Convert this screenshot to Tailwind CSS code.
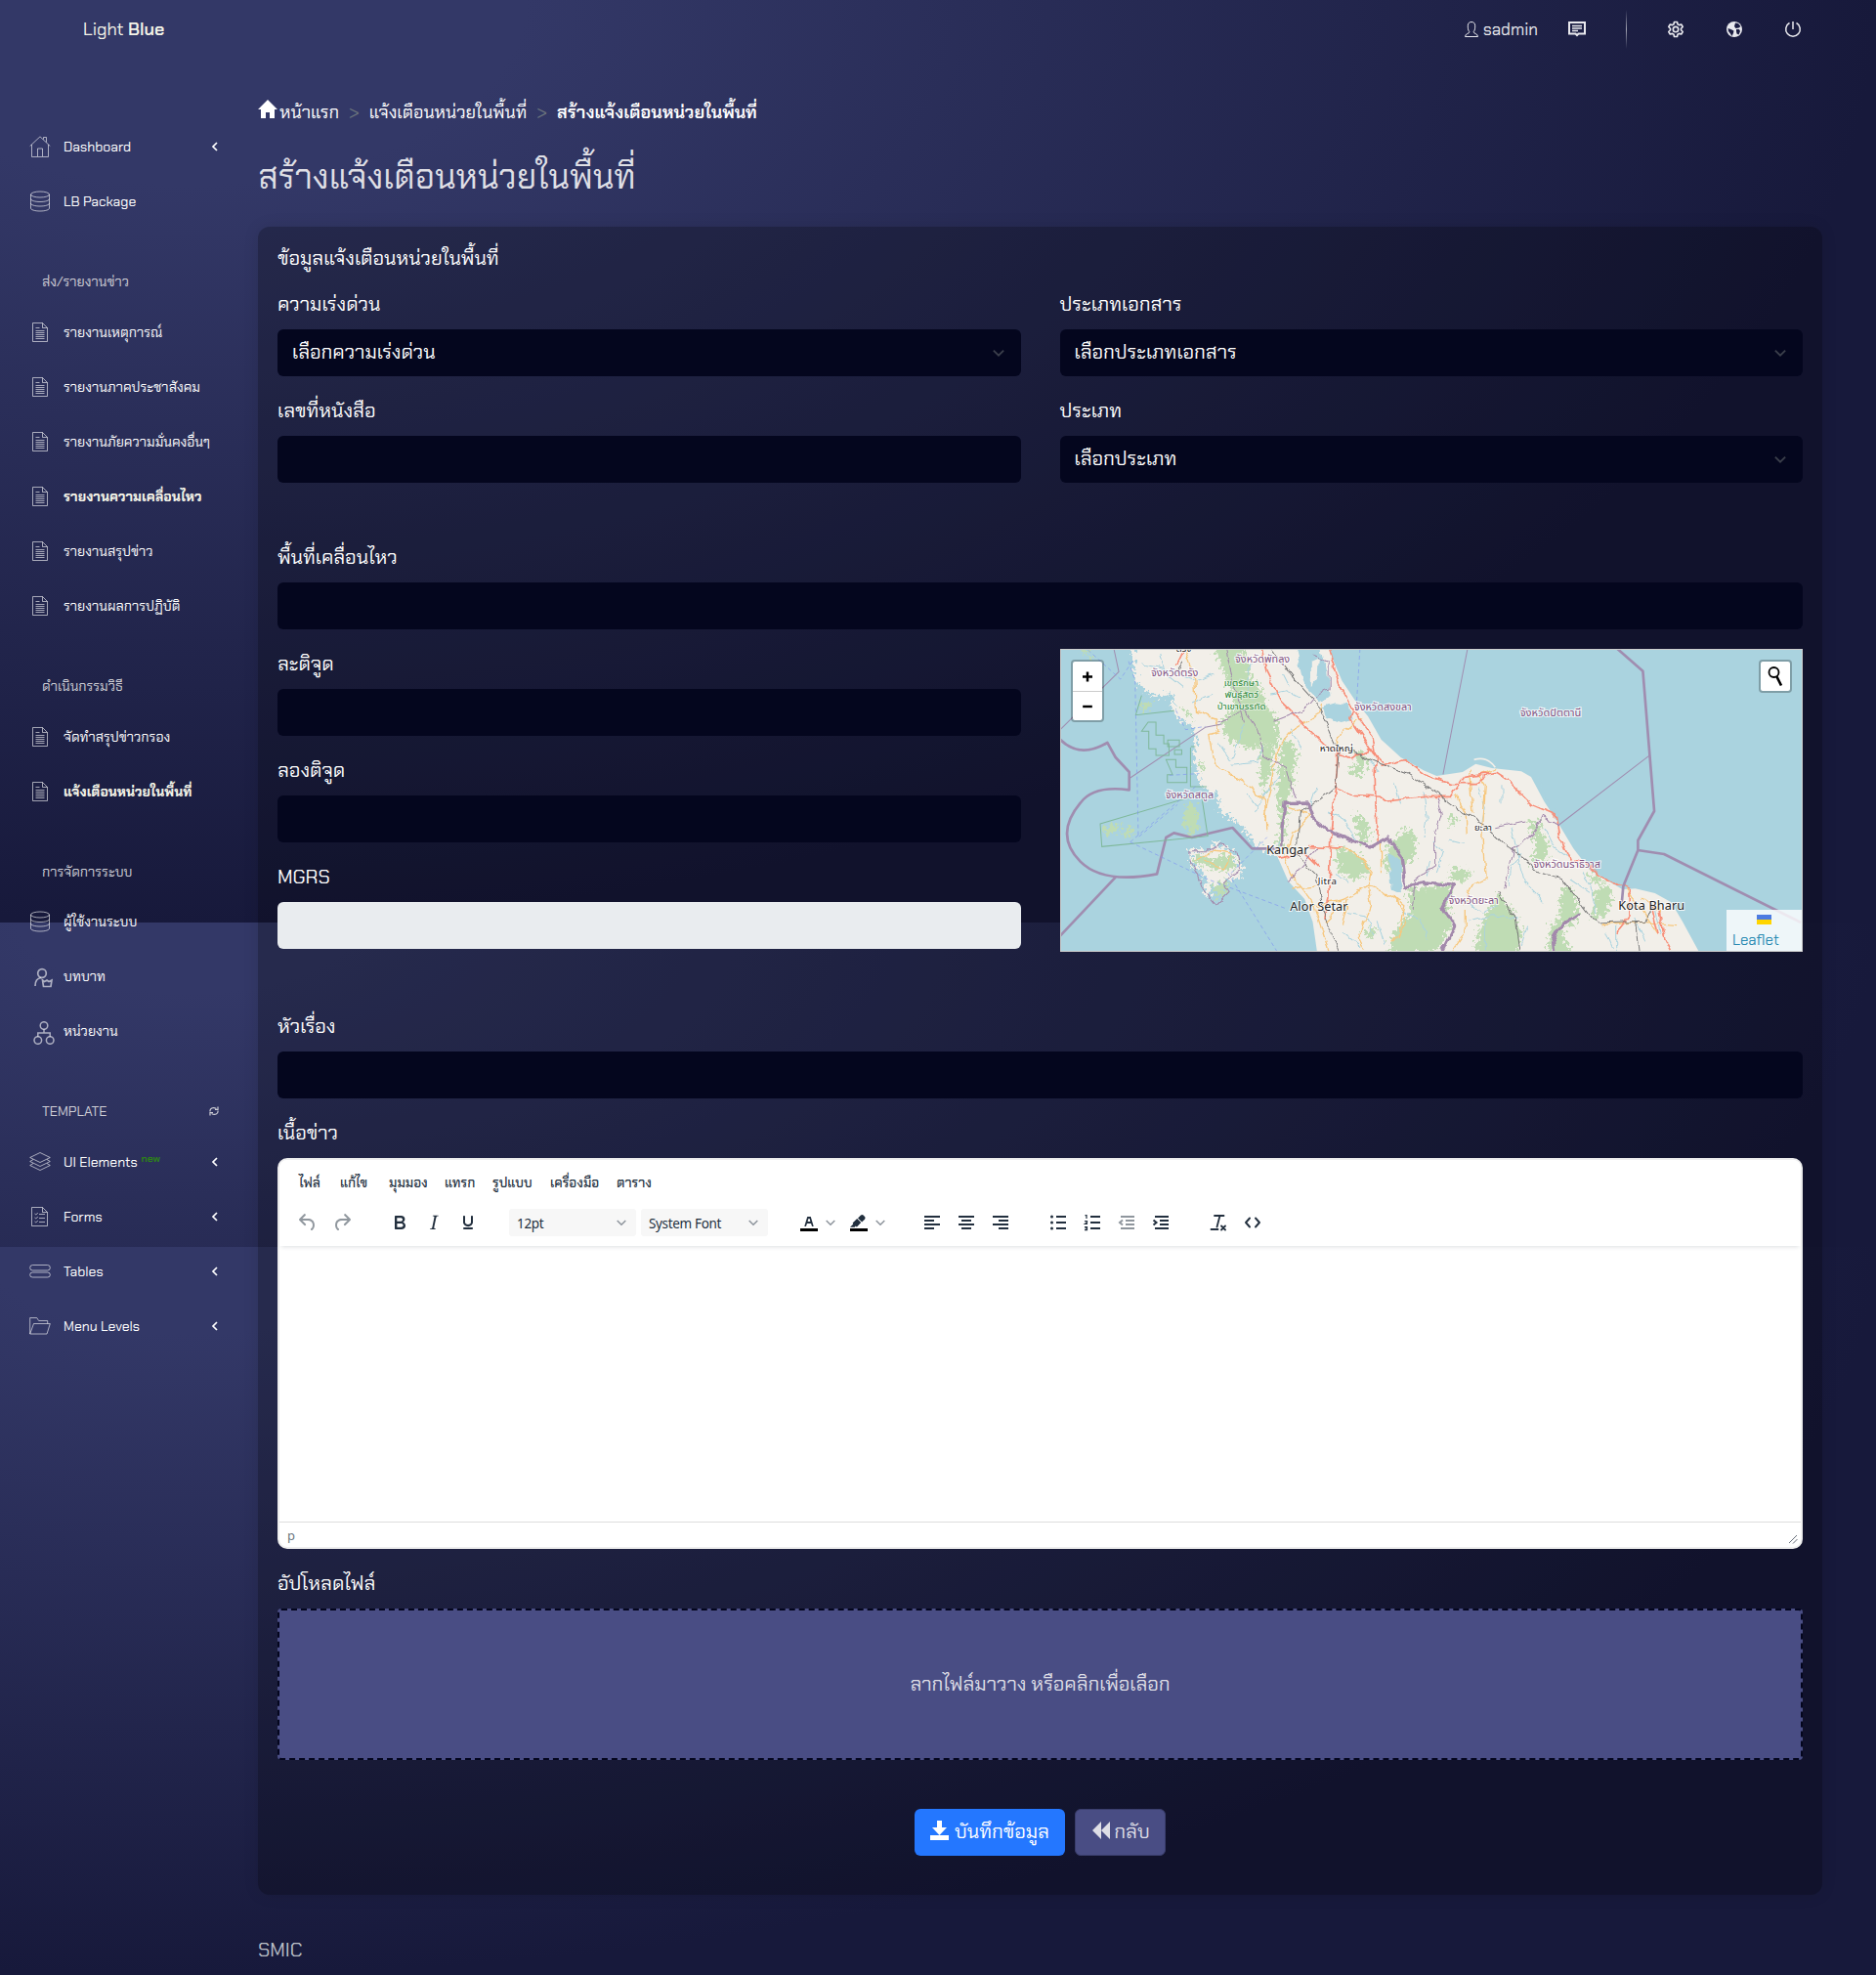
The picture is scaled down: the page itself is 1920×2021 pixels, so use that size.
<!DOCTYPE html>
<html lang="th">
<head>
<meta charset="utf-8">
<title>Light Blue</title>
<script src="https://cdn.jsdelivr.net/npm/@tailwindcss/browser@4"></script>
</head>
<body class="relative w-[1920px] h-[2021px] overflow-hidden bg-[#17193b] font-['Chakra_Petch','Inter',sans-serif] text-white">
<svg class="hidden">
  <symbol id="doc" viewBox="0 0 20 22"><path d="M2.5 1.5h10l5 5v14h-15zM12.500 1.500v5h5M5.500 6.500h4M5.500 9.500h9M5.500 11.500h9M5.500 13.500h9M5.500 15.500h9M5.500 17.500h9" fill="none" stroke="currentColor"/></symbol>
  <symbol id="db" viewBox="0 0 22 22"><g fill="none" stroke="currentColor"><ellipse cx="11" cy="4" rx="9.500" ry="3"/><path d="M1.500 4v14c0 1.700 4 3 9.500 3s9.500-1.300 9.500-3V4M1.500 8.500c0 1.700 4 3 9.500 3s9.500-1.300 9.500-3M1.500 13c0 1.700 4 3 9.500 3s9.500-1.300 9.500-3"/></g></symbol>
  <symbol id="left" viewBox="0 0 8 10"><path d="M6 1L2 5l4 4" fill="none" stroke="currentColor" stroke-width="1.700"/></symbol>
  <symbol id="down" viewBox="0 0 10 10"><path d="M.7 3L5 7.300 9.300 3" fill="none" stroke="currentColor" stroke-width="1.500"/></symbol>
</svg>

<!-- page backdrop: stacked gradient panels -->
<div class="absolute inset-0 -z-10 flex flex-col">
  <div class="h-[944px] bg-[radial-gradient(farthest-side_ellipse_at_10%_0,#333867_20%,#17193b)]"></div>
  <div class="h-[332px] overflow-hidden"><div class="h-[720px] bg-[radial-gradient(farthest-side_ellipse_at_10%_0,#333867_10%,#17193b)]"></div></div>
  <div class="h-[745px] bg-[radial-gradient(farthest-side_ellipse_at_10%_0,#333867_12%,#17193b)]"></div>
</div>

<header class="flex h-[60px] items-center pl-[85px] pr-[76px] text-[#e9e9ee]">
  <div class="text-[18px] text-[#f4f4e8]">Light <b class="font-semibold">Blue</b></div>
  <div class="ml-auto flex items-center">
    <svg class="mr-1 h-[18px] w-4" viewBox="0 0 16 18" fill="none" stroke="currentColor"><path d="M5.800 11.500C4.500 10 4.300 8 4.300 5.500 4.300 3 5.500 1.500 8 1.500s3.700 1.500 3.700 4c0 2.500-.2 4.500-1.500 6 0 2.500 4.300 1.500 4.300 5h-13c0-3.500 4.300-2.500 4.300-5z"/></svg>
    <span class="pt-0.5 text-[17px]">sadmin</span>
    <svg class="ml-[31px] h-4 w-[18px]" viewBox="0 0 18 16"><path fill="none" stroke="currentColor" stroke-width="2" d="M1 1h16v11.500h-6.500L9 14l-1.500-1.500H1z"/><path stroke="currentColor" stroke-width="1.500" d="M4 4.500h10M4 7h10M4 9.500h6"/></svg>
    <div class="ml-[41px] h-10 w-px bg-linear-to-b from-white/0 via-white/60 to-white/0"></div>
    <svg class="ml-[41px] h-[18px] w-[18px]" viewBox="0 0 24 24" fill="none" stroke="currentColor" stroke-width="2.200"><circle cx="12" cy="12" r="3.600"/><path stroke-linejoin="round" d="M10 2h4l.7 3.100 1.900 1.100 3-.9 2 3.400L19.300 11v2l2.300 2.300-2 3.400-3-.9-1.900 1.100L14 22h-4l-.7-3.100-1.900-1.100-3 .9-2-3.400L4.700 13v-2L2.400 8.700l2-3.400 3 .9 1.900-1.100z"/></svg>
    <svg class="ml-[42px] h-[18px] w-[18px]" viewBox="0 0 18 18"><circle cx="9" cy="9" r="8" fill="currentColor"/><path fill="#1a1c41" d="M10 2.500l3 .5 2.500 3-2 1.500-3 .5-1.500-2zM2.500 8l3 1 3 1.500-.5 2.500-1.500 3-1.500-2.500-2-2.500zM11 9h3l1 2-1.500 3.500-2-1-.5-2.500z"/></svg>
    <svg class="ml-[42px] h-[18px] w-[18px]" viewBox="0 0 18 18" fill="none" stroke="currentColor" stroke-width="1.500"><path d="M5.500 2.500a7.300 7.300 0 107 0M9 1v8"/></svg>
  </div>
</header>

<div class="flex">
<nav class="w-[264px] pt-[62px] text-[14px] leading-none">
  <a class="flex h-14 items-center pl-[30px] pr-10"><svg class="h-[22px] w-[22px] text-white/60" viewBox="0 0 22 22" fill="none" stroke="currentColor"><path d="M.7 10.500L11 .8l10.300 9.700M2.500 9v12.500h17V9M14.500 3.500v-2h3v5M8.500 21v-8h5v8"/></svg><span class="ml-[13px]">Dashboard</span><svg class="ml-auto h-[10px] w-2"><use href="#left"/></svg></a>
  <a class="flex h-14 items-center pl-[30px]"><svg class="h-[22px] w-[22px] text-white/60"><use href="#db"/></svg><span class="ml-[13px]">LB Package</span></a>

  <div class="flex h-[78px] items-center pl-[43px] pt-[30px] text-[#cfcfd6]">ส่ง/รายงานข่าว</div>
  <a class="flex h-14 items-center pl-[31px]"><svg class="h-[22px] w-5 text-white/60"><use href="#doc"/></svg><span class="ml-3.5">รายงานเหตุการณ์</span></a>
  <a class="flex h-14 items-center pl-[31px]"><svg class="h-[22px] w-5 text-white/60"><use href="#doc"/></svg><span class="ml-3.5">รายงานภาคประชาสังคม</span></a>
  <a class="flex h-14 items-center pl-[31px]"><svg class="h-[22px] w-5 text-white/60"><use href="#doc"/></svg><span class="ml-3.5">รายงานภัยความมั่นคงอื่นๆ</span></a>
  <a class="flex h-14 items-center pl-[31px] font-bold text-[#f4f4e8]"><svg class="h-[22px] w-5 text-white/60"><use href="#doc"/></svg><span class="ml-3.5">รายงานความเคลื่อนไหว</span></a>
  <a class="flex h-14 items-center pl-[31px]"><svg class="h-[22px] w-5 text-white/60"><use href="#doc"/></svg><span class="ml-3.5">รายงานสรุปข่าว</span></a>
  <a class="flex h-14 items-center pl-[31px]"><svg class="h-[22px] w-5 text-white/60"><use href="#doc"/></svg><span class="ml-3.5">รายงานผลการปฏิบัติ</span></a>

  <div class="flex h-[78px] items-center pl-[43px] pt-[30px] text-[#cfcfd6]">ดำเนินกรรมวิธี</div>
  <a class="flex h-14 items-center pl-[31px]"><svg class="h-[22px] w-5 text-white/60"><use href="#doc"/></svg><span class="ml-3.5">จัดทำสรุปข่าวกรอง</span></a>
  <a class="flex h-14 items-center pl-[31px] font-bold text-[#f4f4e8]"><svg class="h-[22px] w-5 text-white/60"><use href="#doc"/></svg><span class="ml-3.5">แจ้งเตือนหน่วยในพื้นที่</span></a>

  <div class="flex h-[77px] items-center pl-[43px] pt-[30px] text-[#cfcfd6]">การจัดการระบบ</div>
  <a class="flex h-14 items-center pl-[30px]"><svg class="h-[22px] w-[22px] text-white/60"><use href="#db"/></svg><span class="ml-[13px]">ผู้ใช้งานระบบ</span></a>
  <a class="flex h-14 items-center pl-[34px]"><svg class="mt-1 h-[22px] w-[22px] text-white/60" viewBox="0 0 22 22" fill="none" stroke="currentColor" stroke-width="1.700"><circle cx="9" cy="6" r="4.300"/><path d="M2 19c0-5 2-8 6-8.500M9.500 13l2 1.500L14 13l2 1.500 3-1.500-1 6.500h-7.500z"/></svg><span class="ml-[9px]">บทบาท</span></a>
  <a class="flex h-14 items-center pl-[34px]"><svg class="mt-1 h-6 w-[22px] text-white/60" viewBox="0 0 22 24" fill="none" stroke="currentColor" stroke-width="1.500"><circle cx="11" cy="4.500" r="3.800"/><circle cx="4.800" cy="19.500" r="3.800"/><circle cx="17.200" cy="19.500" r="3.800"/><path d="M11 8.300V12M4.800 15.700V12h12.400v3.700"/></svg><span class="ml-[9px]">หน่วยงาน</span></a>

  <div class="flex h-[78px] items-center pl-[43px] pr-10 pt-[30px] text-[#cfcfd6]"><span>TEMPLATE</span><svg class="ml-auto h-[10px] w-[10px]" viewBox="0 0 10 10" fill="none" stroke="currentColor" stroke-width="1.200"><path d="M1 5.500C.5 2 4 .5 7.500 2.500M9 .5V3.500H6M9 4.500C9.500 8 6 9.500 2.500 7.500M1 9.500V6.500h3"/></svg></div>
  <a class="flex h-14 items-center pl-[30px] pr-10"><svg class="h-[22px] w-[22px] text-white/60" viewBox="0 0 22 22" fill="none" stroke="currentColor"><path d="M11 1.500l10.300 5L11 11.500.7 6.500zM4 8.500L.7 10.500 11 15.500l10.300-5L18 8.500M4 12.500L.7 14.500 11 19.500l10.300-5L18 12.500"/></svg><span class="ml-[13px]">UI Elements</span><span class="mb-1.5 ml-1 text-[10.500px] font-semibold text-[#2d8515]">new</span><svg class="ml-auto h-[10px] w-2"><use href="#left"/></svg></a>
  <a class="flex h-14 items-center pl-[30px] pr-10"><svg class="h-[22px] w-[22px] text-white/60" viewBox="0 0 22 22" fill="none" stroke="currentColor"><path d="M2.500 1.500h11l5 5v14h-16zM13.500 1.500v5h5M5.500 8l1.300 1 2-2M5.500 12l1.300 1 2-2M5.500 16l1.300 1 2-2M10 8.500h6M10 12.500h6M10 16.500h6"/></svg><span class="ml-[13px]">Forms</span><svg class="ml-auto h-[10px] w-2"><use href="#left"/></svg></a>
  <a class="flex h-14 items-center pl-[30px] pr-10"><svg class="h-[22px] w-[22px] text-white/60" viewBox="0 0 22 22" fill="none" stroke="currentColor"><rect x=".7" y="4.500" width="20.600" height="5.500" rx="2.700"/><rect x=".7" y="12" width="20.600" height="5" rx="2.500"/></svg><span class="ml-[13px]">Tables</span><svg class="ml-auto h-[10px] w-2"><use href="#left"/></svg></a>
  <a class="flex h-14 items-center pl-[30px] pr-10"><svg class="h-[22px] w-[22px] text-white/60" viewBox="0 0 22 22" fill="none" stroke="currentColor"><path d="M.7 19V2.500h7l2 3h9v3M.7 19l3.800-10.500H21.300L18 19z"/></svg><span class="ml-[13px]">Menu Levels</span><svg class="ml-auto h-[10px] w-2"><use href="#left"/></svg></a>
</nav>

<main class="w-[1601px] pt-[34px]">
  <div class="flex h-10 items-center pt-0.5 text-[18px] leading-none">
    <svg class="mb-1.5 mr-0.5 h-5 w-5 shrink-0" viewBox="0 0 20 20"><path fill="#fff" d="M10 0L0 10h3v9h5v-6h4v6h5v-9h3z"/></svg>
    <span>หน้าแรก</span><span class="mx-[10px] text-[#6c757d]">&gt;</span><span>แจ้งเตือนหน่วยในพื้นที่</span><span class="mx-[10px] text-[#6c757d]">&gt;</span><b class="font-semibold">สร้างแจ้งเตือนหน่วยในพื้นที่</b>
  </div>
  <h1 class="flex h-[98px] items-center pb-1 text-[35px] leading-none text-[#dfdfe5]">สร้างแจ้งเตือนหน่วยในพื้นที่</h1>

  <section class="h-[1707px] rounded-xl bg-black/25 px-5 text-[20px] shadow-[0_0_16px_rgba(0,0,0,.1)]">
    <div class="flex h-[62px] items-center pt-px">ข้อมูลแจ้งเตือนหน่วยในพื้นที่</div>
    <div class="grid grid-cols-2 gap-x-10">
      <div><div class="flex h-[43px] items-center pb-[10px]">ความเร่งด่วน</div><div class="flex h-12 items-center justify-between rounded-md bg-[#04061e] px-[15px] pb-0.5 pr-[17px]">เลือกความเร่งด่วน<svg class="mt-0.5 h-3 w-3 text-[#3b3f4b]"><use href="#down"/></svg></div></div>
      <div><div class="flex h-[43px] items-center pb-[10px]">ประเภทเอกสาร</div><div class="flex h-12 items-center justify-between rounded-md bg-[#04061e] px-[15px] pb-0.5 pr-[17px]">เลือกประเภทเอกสาร<svg class="mt-0.5 h-3 w-3 text-[#3b3f4b]"><use href="#down"/></svg></div></div>
      <div class="pt-[18px]"><div class="flex h-[43px] items-center pb-[10px]">เลขที่หนังสือ</div><div class="h-12 rounded-md bg-[#04061e]"></div></div>
      <div class="pt-[18px]"><div class="flex h-[43px] items-center pb-[10px]">ประเภท</div><div class="flex h-12 items-center justify-between rounded-md bg-[#04061e] px-[15px] pb-0.5 pr-[17px]">เลือกประเภท<svg class="mt-0.5 h-3 w-3 text-[#3b3f4b]"><use href="#down"/></svg></div></div>
    </div>
    <div class="pt-[59px]"><div class="flex h-[43px] items-center pb-[10px]">พื้นที่เคลื่อนไหว</div><div class="h-12 rounded-md bg-[#04061e]"></div></div>
    <div class="grid grid-cols-2 gap-x-10">
      <div>
        <div class="flex h-[61px] items-center pt-2">ละติจูด</div><div class="h-12 rounded-md bg-[#04061e]"></div>
        <div class="flex h-[61px] items-center pt-2">ลองติจูด</div><div class="h-12 rounded-md bg-[#04061e]"></div>
        <div class="flex h-[61px] items-center pt-2">MGRS</div><div class="h-12 rounded-md bg-[#e9ecef]"></div>
      </div>
      <div class="relative mt-5 h-[310px] overflow-hidden border border-[#ccc] bg-[#aad3df]">
        <svg class="block h-full w-full" viewBox="18 15 2274 924" preserveAspectRatio="none" fill="none" font-family="Noto Sans Thai, Noto Sans, sans-serif">
          <filter id="rough" x="-5%" y="-5%" width="110%" height="110%"><feTurbulence type="fractalNoise" baseFrequency=".09" numOctaves="3" seed="9"/><feDisplacementMap in="SourceGraphic" scale="55" xChannelSelector="R" yChannelSelector="G"/></filter>
          <filter id="bend" x="-5%" y="-5%" width="110%" height="110%"><feTurbulence type="fractalNoise" baseFrequency=".03" numOctaves="2" seed="2"/><feDisplacementMap in="SourceGraphic" scale="22" xChannelSelector="R" yChannelSelector="G"/></filter>
          <path fill="#f2efe9" filter="url(#rough)" d="M240 0v50l10 70 50 40 65-10-10 40 18 30 50 30 10 30-8 60 20 90 50 30 10 50 60 40 40 50 45 35 60 20V0z"/>
          <path fill="#f2efe9" d="M400 0L440 260 480 370 560 470 640 570 690 600 682 650 715 725 765 780 790 850 806 960H1985L1925 850 1890 790 1840 762 1780 748 1740 750 1640 690 1590 625 1545 550 1500 480 1460 405 1430 388 1340 378 1290 365 1250 390 1170 402 1130 385 1060 345 1000 290 960 220 920 170 880 110 850 40 835 0z"/>
          <path stroke="#f2efe9" stroke-width="5" d="M1285 352q40-12 65 24"/>
          <g filter="url(#rough)"><path fill="#f2efe9" d="M412 630h50l30-20 50 20 30 50-4 30-60 20-40 16-20-60-36-20zM455 740h20v30h-20z"/>
          <g fill="#bfdcb4"><path d="M485 0l45 120 20 60-40 60 10 40 50 30 50 12 10-22 50 14 6-40-10-60-26-20-10-50-40-40-20-104zM690 300l30-6 25 30-10 40-5 60-16 60-10 100-10 50-12-20 10-60-12-80 10-100zM630 300l40 10-4 60-30 90-10-80zM920 330l36 4-4 50-20 20-40-14 34-20zM860 620l70 20 40 60-50 20-50-20zM910 520l40 10 20 60-30 20zM1080 560l30 30-10 60-50 60-40-20 10-70zM1080 745h60l80-10-20 60 20 60-50 90h-150l20-70 50-50zM1360 760l50 70 24 60-24 70h-90l-30-30 10-60zM1450 545l30-8 10 30 26 60-16 40-44 2 20-50zM1560 740l30 12 16 60-16 46-30 4-14-60zM1655 752l40-20 14 40-20 60-40 10zM1520 860l50-40-10 70 30 70h-80zM945 880l40-16-8 30-20 10zM1210 520l30 10-30 30zM1220 680l60 20-30 30-40-10zM1620 690l50 30 20 20-40-10z"/><path d="M430 640l50 14 60-10 20 40-40 10-50-10-50-20zM400 490h30l12 60-22 40-30-40zM150 560l50-10-14 22-36 14zM212 560l26-4-4 34-20-6zM480 750l40-30 14 20-34 36zM90 10l24 36-8 4-20-30zM260 170l40 10-30 26zM440 360l20 10-10 20zM380 190l40 20v20zM550 290l30-10M570 70l20-10 10 30-20 10z"/></g></g>
          <g filter="url(#bend)">
          <path fill="#aad3df" d="M735 0l20 92 16 40 40 40 30-12-6-70-20-90zM820 190l40-12 40 6 14 46-40 10-40-16zM1020 640l40 20 4 100-30-10z"/>
          <path fill="#f2efe9" d="M785 50l24-10-4 60-20 30z"/>
          <path stroke="#aad3df" stroke-width="3" d="M350 80l80 30 60-20M540 370l80-10 20-50M660 150l50-10 40 20M580 240l-20 60-20 50M840 510l50 30 30 60M1130 450l10 80-10 60M690 400l-50 60-30 50M890 820l60 10 30 60M1160 600l30 40-20 60M1400 560l20 90 20 80 60 60M1370 430v60M1300 440l20 60-10 40M1530 500l40 60M1720 860v80M1780 840l30 70M1250 780l60 40 50-20M700 560l-20 60M270 60l100 20M1620 700l30 60 10 60M880 880l60 50M1040 420l20 70M720 260l40 60M320 30l20 60 50 40M420 180l60-30M600 60l-20 60 30 50M700 90l20 40M500 300l40 60M590 460l30 40M960 350l30 40M800 440l-20 60M990 850l20 70M860 700l40 30M1060 820l60 20 20 60M1150 660l-10 50M1210 600l40 10M1430 640l-30 40-10 60M1480 400l30 80M1500 560l30 60 40 30M1580 720l60 40M1690 880l20 50M1840 800l20 90M1270 850l70-20 80 10M1320 850v90M1450 860l-20 60"/>
          <path stroke-width="4" stroke-linejoin="round" stroke="#f7c77d" d="M400 15l28 90 5 100 60 20 10 40-30 10 20 100 80 40 70 60 4 90M820 180l-10 30-80 50-50 60-20 120-20 100M940 220l-60 50-20 40M700 640l30 70 60 80 50 150M720 500l60 20-50 60-20 70M830 620l80 10 60 60-10 50-70 40-90 20M960 740l70 30 40 30-20 100M960 740l10 60-40 100 20 40M1000 600v100M1250 800l30-60 40-20-10-130 10-160-20-30 50-20M1230 460l30 60 3 60M1270 380l10 140M1260 810v70l-40 60M1750 750l60 80 40 60M1680 860l120-10 110 10M1800 780l60 40M430 660l60-30 50 10-20 50-60-30M730 750l70-10M900 780l-20 80M830 850l60-60M1040 770l40 80-50 60"/>
          <path stroke="#f88e78" stroke-width="5" stroke-linejoin="round" d="M628 0l20 82 50 100 60 60 70 70 80 35 60-25 40 40M835 0l40 132 40 70 60 80 10 60-4 60 6 200M915 195l-10 30 80 120M865 320v60l-20 200-6 200-15 60M780 620l100 4M855 435l60 25 80 5 20 15 120-14h80l40-60 100-15 30 20 80 80 70 30 10 60 34 80h40l40 40 100 50 4 80-40 50M1140 400l80 25h70l40-30M1000 370l70-20 60 45 20 10M1830 800l20 90M1850 800l20 100 20 40M680 655l90-15 40 40M370 60l20-40 20-20"/>
          <path stroke="#777" stroke-width="3" d="M390 50l-20 30M665 15l60 80 90 100 40 100 15 30-10 110-110 80-10 130 60 60 20 110 50 126M910 325l90 40 80 30 90 60 80 60 60 30 60 60 80 60 20 30 80 20 50 60 60 80 150-5 20-50M1780 850l10 90M1360 760l50 80 14 100"/>
          <path stroke="#a389ac" stroke-width="3" d="M520 0l30 125 30 110M670 235l100-40 40-50 30-10V50l-50-20M500 240l80-40 40 60 20 80 70 40 20 80 10 10M1170 470l15 50-20 60v100l-60 40-10 90M1545 555l-50-30-30 60-60 40-30 120M715 725l90-100M1350 560l90-20M412 632h60l40-20 45 25 12 50-55 40 20 30-40 40-40-50-35-80z"/>
          <path stroke="#a389ac" stroke-width="10" stroke-linejoin="round" d="M695 625v-60l10-80 70-2 15 50 60 45 115 43 55-30 45 60 10 90 70-12 80 10-35 65 35 60-50 100M1530 960l-5-50 30-50 55-35"/>
          </g>
          <g stroke="#a08db0" stroke-linejoin="round"><path stroke-width="8" d="M15 290q60 60 145 10l25 45 42 45v55q-110-15-150 40c-50 60-60 120 0 180q70 70 235 38l28-112 24-14 55 14 125-30 60 64h80M185 713L15 893M1725 12l78 68 35 430-50 90v30l-45 110-5 55M1788 630l80 12 420 210"/><path stroke-width="3" d="M180 12l15 70L15 260M230 408l230-155 50-10M1265 12l-75 385M1542 555l280-215"/></g>
          <path stroke="#7fb89a" stroke-width="3" d="M365 202l-118 13 18-60M138 549l310-92 20 130-325 32zM285 237h24v40h24v26h16v36h-40v-20h-22v-54h-22zM345 292h36v20h-36zM366 322h22v14h-22zM340 352h30v24h34v46h-60v-24h16zM415 315v120h50M430 312h-14"/>
          <path stroke="#8097f0" stroke-width="2.500" stroke-dasharray="12 9" opacity=".8" d="M935 12l-10 160M225 50l20 60 10 480 120-100M230 605l240 115 240 90M230 605l200-170M100 15l100 90 40-60M530 700l150 240M540 700l110-110M370 200l30 60 60-10M350 400l90-5"/>
          <g font-size="29" fill="#7f5181" stroke="#fff" stroke-width="6" paint-order="stroke" stroke-opacity=".8"><text x="552" y="54" textLength="168" lengthAdjust="spacingAndGlyphs">จังหวัดพัทลุง</text><text x="294" y="96" textLength="145" lengthAdjust="spacingAndGlyphs">จังหวัดตรัง</text><text x="917" y="202" textLength="176" lengthAdjust="spacingAndGlyphs">จังหวัดสงขลา</text><text x="338" y="472" textLength="148" lengthAdjust="spacingAndGlyphs">จังหวัดสตูล</text><text x="1426" y="218" textLength="188" lengthAdjust="spacingAndGlyphs">จังหวัดปัตตานี</text><text x="1467" y="685" textLength="206" lengthAdjust="spacingAndGlyphs">จังหวัดนราธิวาส</text><text x="1207" y="796" textLength="153" lengthAdjust="spacingAndGlyphs">จังหวัดยะลา</text></g>
          <g font-size="28" fill="#1e8433" stroke="#fff" stroke-width="5" paint-order="stroke" stroke-opacity=".6"><text x="518" y="126" textLength="106" lengthAdjust="spacingAndGlyphs">เขตรักษา</text><text x="520" y="162" textLength="104" lengthAdjust="spacingAndGlyphs">พันธุ์สัตว์</text><text x="497" y="197" textLength="149" lengthAdjust="spacingAndGlyphs">ป่าเขาบรรทัด</text></g>
          <g fill="#222" stroke="#fff" stroke-width="6" paint-order="stroke" stroke-opacity=".8"><text x="370" y="22" font-size="28" textLength="48" lengthAdjust="spacingAndGlyphs">ตรัง</text><text x="812" y="328" font-size="28" textLength="102" lengthAdjust="spacingAndGlyphs">หาดใหญ่</text><text x="1286" y="571" font-size="28" textLength="54" lengthAdjust="spacingAndGlyphs">ยะลา</text><text x="648" y="643" font-size="38" textLength="130">Kangar</text><text x="806" y="736" font-size="29" textLength="57">Jitra</text><text x="720" y="816" font-size="38" textLength="178">Alor Setar</text><text x="1728" y="814" font-size="38" textLength="203">Kota Bharu</text></g>
        </svg>
        <div class="absolute left-2.5 top-2.5 flex h-[64px] w-[34px] flex-col rounded border-2 border-black/25 bg-white bg-clip-padding">
          <svg class="h-[31px] border-b border-[#ccc]" viewBox="0 0 30 30"><path d="M10 15.500h10M15 10.500v10" stroke="#000" stroke-width="2.500"/></svg>
          <svg class="h-[29px]" viewBox="0 0 30 30"><path d="M10 15.500h10" stroke="#000" stroke-width="2.500"/></svg>
        </div>
        <div class="absolute right-2.5 top-2.5 h-[34px] w-[34px] rounded border-2 border-black/25 bg-white bg-clip-padding"><svg viewBox="0 0 30 30" fill="none" stroke="#000"><circle cx="13.500" cy="11" r="5" stroke-width="1.800"/><path d="M16.500 15.500l4.500 9" stroke-width="2.600"/></svg></div>
        <div class="absolute bottom-0 right-0 h-[42px] w-[77px] bg-white/80 pl-[6px] pt-[5px] text-[15px] leading-none text-[#2b8bb3]"><div class="ml-[25px] h-[10px] w-[15px] border-b-[5px] border-[#ffd500] bg-[#4c7be1]"></div><div class="mt-[9px]">Leaflet</div></div>
      </div>
    </div>
    <div class="pt-[59px]"><div class="flex h-[43px] items-center pb-[10px]">หัวเรื่อง</div><div class="h-12 rounded-md bg-[#04061e]"></div></div>
    <div class="flex h-[61px] items-center pt-2">เนื้อข่าว</div>
    <div class="flex h-[400px] flex-col rounded-[10px] border-2 border-[#eee] bg-white text-[#222f3e]">
      <div class="z-10 h-[88px] shrink-0 rounded-t-lg bg-white shadow-[0_3px_4px_-2px_rgba(34,47,62,.15)]">
        <div class="flex h-[46px] items-center pl-5 pt-0.5 text-[13.500px] font-medium leading-none"><span class="w-[42px]">ไฟล์</span><span class="w-[50px]">แก้ไข</span><span class="w-[57px]">มุมมอง</span><span class="w-[49px]">แทรก</span><span class="w-[59px]">รูปแบบ</span><span class="w-[68px]">เครื่องมือ</span><span>ตาราง</span></div>
        <div class="flex h-[36px] items-center pl-[11px]">
          <div class="flex w-[95px] gap-px pl-[6px] text-[#222f3e]/50"><svg class="mr-[10px] h-6 w-6" viewBox="0 0 24 24" fill="currentColor"><path d="M6.400 8H12c3.700 0 6.200 2 6.800 5.100.6 2.700-.4 5.600-2.300 6.800a1 1 0 01-1-1.800c1.100-.6 1.800-2.700 1.400-4.600-.5-2.100-2.100-3.500-4.900-3.500H6.400l3.300 3.300a1 1 0 11-1.400 1.400l-5-5a1 1 0 010-1.400l5-5a1 1 0 011.400 1.400L6.400 8z"/></svg><svg class="h-6 w-6 -scale-x-100" viewBox="0 0 24 24" fill="currentColor"><path d="M6.400 8H12c3.700 0 6.200 2 6.800 5.100.6 2.700-.4 5.600-2.300 6.800a1 1 0 01-1-1.800c1.100-.6 1.800-2.700 1.400-4.600-.5-2.100-2.100-3.500-4.900-3.500H6.400l3.300 3.300a1 1 0 11-1.400 1.400l-5-5a1 1 0 010-1.400l5-5a1 1 0 011.400 1.400L6.400 8z"/></svg></div>
          <div class="flex w-[129px] gap-[11px] pl-[5px]">
            <svg class="h-6 w-6" viewBox="0 0 24 24" fill="currentColor" fill-rule="evenodd"><path d="M7.800 19c-.3 0-.5 0-.6-.2l-.2-.5V5.700c0-.2 0-.4.2-.5l.6-.2h5c1.500 0 2.700.3 3.500 1 .7.6 1.100 1.400 1.100 2.500a3 3 0 01-.6 1.900c-.4.6-1 1-1.600 1.200.4.1.9.3 1.300.6s.8.7 1 1.200c.4.4.5 1 .5 1.600 0 1.300-.4 2.300-1.300 3-.8.7-2.100 1-3.800 1H7.800zm5-8.300c.6 0 1.200-.1 1.600-.5.4-.3.6-.7.6-1.300 0-1.100-.8-1.700-2.300-1.700H9.300v3.500h3.400zm.5 6c.7 0 1.300-.1 1.700-.4.4-.4.6-.9.6-1.500s-.2-1-.7-1.400c-.4-.3-1-.4-2-.4H9.400v3.800h4z"/></svg>
            <svg class="h-6 w-6" viewBox="0 0 24 24" fill="currentColor"><path d="M16.700 4.700l-.1.9h-.3c-.6 0-1 0-1.400.3-.3.3-.4.6-.5 1.100l-2.100 9.800v.6c0 .5.4.8 1.400.8h.2l-.2.8H8l.2-.8h.2c1.100 0 1.800-.5 2-1.500l2-9.800.1-.5c0-.6-.4-.8-1.400-.8h-.3l.2-.9h5.800z"/></svg>
            <svg class="h-6 w-6" viewBox="0 0 24 24" fill="currentColor"><path d="M16 5c.6 0 1 .4 1 1v5.500a4 4 0 01-.4 1.800l-1 1.400a5.300 5.300 0 01-5.500 1 5 5 0 01-1.600-1c-.5-.4-.8-.9-1.100-1.400a4 4 0 01-.4-1.800V6c0-.6.4-1 1-1s1 .4 1 1v5.500c0 .3 0 .6.2 1l.6.7a3.300 3.300 0 002.200.8 3.400 3.400 0 002.200-.8c.3-.2.4-.5.6-.8l.2-.9V6c0-.6.4-1 1-1zM8 17h8c.6 0 1 .4 1 1s-.4 1-1 1H8a1 1 0 010-2z"/></svg>
          </div>
          <div class="flex h-7 w-[130px] items-center justify-between rounded-[3px] bg-[#f7f7f7] px-2 pt-0.5 font-['Noto_Sans'] text-[13.500px] tracking-tight">12pt<svg class="mb-0.5 mr-0.5 h-[10px] w-[10px] text-[#8d949c]"><use href="#down"/></svg></div>
          <div class="ml-[5px] flex h-7 w-[130px] items-center justify-between rounded-[3px] bg-[#f7f7f7] px-2 pt-0.5 font-['Noto_Sans'] text-[13.500px] tracking-tight">System Font<svg class="mb-0.5 mr-0.5 h-[10px] w-[10px] text-[#8d949c]"><use href="#down"/></svg></div>
          <svg class="ml-[30px] h-6 w-6" viewBox="0 0 24 24"><path d="M3 18h18v3H3z" fill="#000"/><path fill="currentColor" fill-rule="evenodd" d="M8.700 16h-.8a.5.5 0 01-.5-.6l2.700-9c.1-.3.3-.4.5-.4h2.800c.2 0 .4.1.5.4l2.700 9a.5.5 0 01-.5.6h-.8a.5.5 0 01-.4-.4l-.7-2.200c0-.3-.3-.4-.5-.4h-3.400c-.2 0-.4.1-.5.4l-.7 2.200c0 .3-.2.4-.4.4zm2.600-7.600l-.6 2a.5.5 0 00.5.6h1.600a.5.5 0 00.5-.6l-.6-2c0-.3-.3-.4-.5-.4h-.4c-.2 0-.4.1-.5.4z"/></svg>
          <svg class="ml-[5px] h-[10px] w-[10px] text-[#8d949c]"><use href="#down"/></svg>
          <svg class="ml-3 h-6 w-6" viewBox="0 0 24 24"><path d="M3 18h18v3H3z" fill="#000"/><path fill="currentColor" d="M7.700 16.700H3l3.300-3.300-.7-.8L10.200 8l4 4.100-4 4.200c-.2.2-.6.2-.8 0l-.6-.7-1.100 1.100zm5-7.500L11 7.400l3-2.900a2 2 0 012.600 0L18 6c.7.7.7 2 0 2.700l-2.900 2.900-1.800-1.800-.5-.6"/></svg>
          <svg class="ml-[5px] h-[10px] w-[10px] text-[#8d949c]"><use href="#down"/></svg>
          <div class="ml-9 flex gap-[11px]">
            <svg class="h-6 w-6" viewBox="0 0 24 24" stroke="currentColor" stroke-width="2"><path d="M4 6h16M4 10h10M4 14h16M4 18h10"/></svg>
            <svg class="h-6 w-6" viewBox="0 0 24 24" stroke="currentColor" stroke-width="2"><path d="M4 6h16M7 10h10M4 14h16M7 18h10"/></svg>
            <svg class="h-6 w-6" viewBox="0 0 24 24" stroke="currentColor" stroke-width="2"><path d="M4 6h16M10 10h10M4 14h16M10 18h10"/></svg>
          </div>
          <div class="ml-[35px] flex gap-[11px]">
            <svg class="h-6 w-6" viewBox="0 0 24 24" stroke="currentColor" stroke-width="2" fill="currentColor"><path d="M10 6h10M10 12h10M10 18h10"/><g stroke="none"><circle cx="5.500" cy="6" r="1.500"/><circle cx="5.500" cy="12" r="1.500"/><circle cx="5.500" cy="18" r="1.500"/></g></svg>
            <svg class="h-6 w-6" viewBox="0 0 24 24" stroke="currentColor" stroke-width="2" fill="none"><path d="M10 6h10M10 12h10M10 18h10"/><path stroke-width="1.200" d="M4.500 4.600H6V8M4 10.600h2.500v1.500L4.500 13.500h2.500M4 16.600h2.500v3H4M4.500 18h2"/></svg>
            <svg class="h-6 w-6 opacity-50" viewBox="0 0 24 24" stroke="currentColor" stroke-width="2" fill="none"><path d="M6 6h14M11 10h9M11 14h9M6 18h14M8 9.500L5 12l3 2.500"/></svg>
            <svg class="h-6 w-6" viewBox="0 0 24 24" stroke="currentColor" stroke-width="2" fill="none"><path d="M6 6h14M11 10h9M11 14h9M6 18h14M4.500 9.500L7.500 12l-3 2.500"/></svg>
          </div>
          <div class="ml-[35px] flex gap-[11px]">
            <svg class="h-6 w-6" viewBox="0 0 24 24" stroke="currentColor" stroke-width="1.800" fill="none" stroke-linecap="round"><path d="M8 5h9.500M13.500 5l-3 11.500M4.500 19h7M15 15.500l4 4M19 15.500l-4 4"/></svg>
            <svg class="h-6 w-6" viewBox="0 0 24 24" stroke="currentColor" stroke-width="1.900" fill="none" stroke-linecap="round" stroke-linejoin="round"><path d="M9 7.500L5 12l4 4.500M15 7.500l4 4.500-4 4.500"/></svg>
          </div>
        </div>
      </div>
      <div class="flex-1"></div>
      <div class="flex h-[26px] items-center justify-between border-t border-[#ddd] pl-2 pr-[3px] font-['Noto_Sans'] text-[13px] text-[#222f3e]/70"><span class="pt-0.5">p</span><svg class="mt-2 h-[10px] w-[10px]" viewBox="0 0 10 10" stroke="currentColor"><path d="M1 9l8-8M5 9.500L9.500 5"/></svg></div>
    </div>
    <div class="flex h-[61px] items-center pt-2">อัปโหลดไฟล์</div>
    <div class="flex h-[155px] items-center justify-center rounded-[4px] border-2 border-dashed border-[#04061e] bg-[#494d84] pb-0.5 text-[#dedee6]">ลากไฟล์มาวาง หรือคลิกเพื่อเลือก</div>
    <div class="flex justify-center gap-2.5 pt-[50px]">
      <div class="flex h-12 w-[154px] items-center justify-center gap-1.5 rounded-md bg-[#2477ff] pb-0.5"><svg class="mb-0.5 h-5 w-[19px]" viewBox="0 0 19 20" fill="#fff"><path d="M7 0h5v7h5l-7.500 8L2 7h5zM0 15h19v5H0z"/></svg>บันทึกข้อมูล</div>
      <div class="flex h-12 w-[93px] items-center justify-center gap-1 rounded-md border border-[#3a3e6c] bg-[#494d84] pb-0.5 pl-0.5 text-[#dedee6]"><svg class="mb-0.5 h-[18px] w-[18px]" viewBox="0 0 18 18" fill="currentColor"><path d="M9 0v18L0 9zM18 0v18L9 9z"/></svg>กลับ</div>
    </div>
  </section>
  <footer class="pt-[41px] text-[20px] text-[#bcc0c8]">SMIC</footer>
</main>
</div>
</body>
</html>
